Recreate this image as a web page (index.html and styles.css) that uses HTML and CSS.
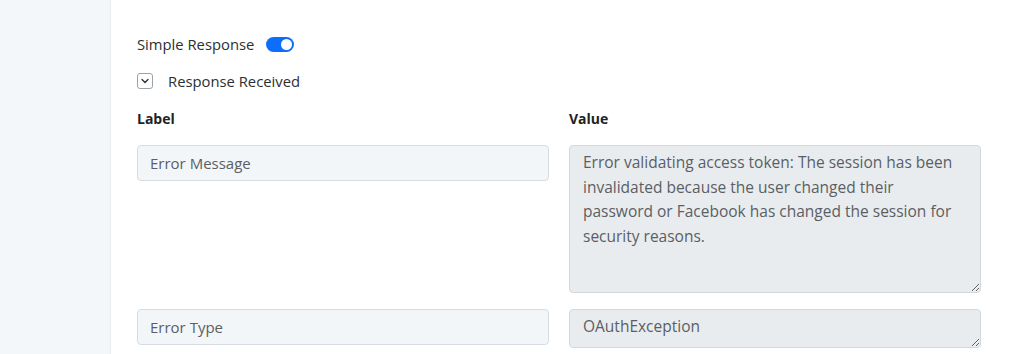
FILE: index.html
```html
<!DOCTYPE html>
<html lang="en">
<head>
  <meta charset="UTF-8" />
  <title>Response</title>
  <link rel="stylesheet" href="styles.css">
</head>
<body>
  <!-- Sidebar -->
  <div class="sidebar"></div>

  <!-- Main Content -->
  <div class="main">
    <div class="option-row">
      <span>Simple Response</span>
      <span class="toggle"><span class="knob"></span></span>
    </div>

    <div class="option-row collapse">
      <span class="chevron">
        <svg width="8" height="6" viewBox="0 0 8 6"><path d="M1 1.5 L4 4.5 L7 1.5" fill="none" stroke="#333" stroke-width="1.4" stroke-linecap="round" stroke-linejoin="round"/></svg>
      </span>
      <span>Response Received</span>
    </div>

    <div class="grid">
      <div class="head">Label</div>
      <div class="head">Value</div>

      <input type="text" class="field" value="Error Message" />
      <textarea class="value big">Error validating access token: The session has been invalidated because the user changed their password or Facebook has changed the session for security reasons.</textarea>

      <input type="text" class="field" value="Error Type" />
      <textarea class="value small">OAuthException</textarea>
    </div>
  </div>
</body>
</html>
```

FILE: styles.css
```css
* {
  box-sizing: border-box;
}

body {
  margin: 0;
  font-family: "Open Sans", sans-serif;
  background-color: white;
  color: #2b2f33;
  height: 100vh;
  display: flex;
  overflow: hidden;
}

.sidebar {
  width: 111px;
  flex-shrink: 0;
  background-color: #f4f7fa;
  border-right: 1px solid #e9edf1;
}

.main {
  padding: 33px 0 0 26px;
  flex: 1;
}

.option-row {
  display: flex;
  align-items: center;
  gap: 12px;
  font-size: 14.8px;
  height: 22px;
}

.collapse {
  margin-top: 15px;
  gap: 15px;
}

.toggle {
  width: 28px;
  height: 15px;
  border-radius: 8px;
  background-color: #0d6efd;
  display: flex;
  align-items: center;
  justify-content: flex-end;
  padding-right: 2px;
}

.knob {
  width: 11px;
  height: 11px;
  border-radius: 50%;
  background-color: white;
}

.chevron {
  width: 16px;
  height: 16px;
  border: 1px solid #9aa1a8;
  border-radius: 3px;
  display: flex;
  align-items: center;
  justify-content: center;
}

.grid {
  display: grid;
  grid-template-columns: 412px 412px;
  column-gap: 20px;
  row-gap: 16px;
  margin-top: 17px;
}

.head {
  font-weight: bold;
  font-size: 14px;
  color: #222;
  margin-bottom: 1px;
}

.field,
.value {
  font-family: "Open Sans", sans-serif;
  font-size: 15px;
  color: #5a5f64;
  border: 1px solid #d6dce2;
  border-radius: 4px;
  padding: 0 12px;
  margin: 0;
  outline: none;
}

.field {
  height: 36px;
  background-color: #f3f6f9;
}

.value {
  background-color: #e9ecef;
  border-color: #d3d8dd;
  font-size: 15.5px;
  line-height: 24.5px;
  padding: 4px 13px;
  resize: vertical;
}

.big {
  height: 148px;
}

.small {
  height: 39px;
}
```
